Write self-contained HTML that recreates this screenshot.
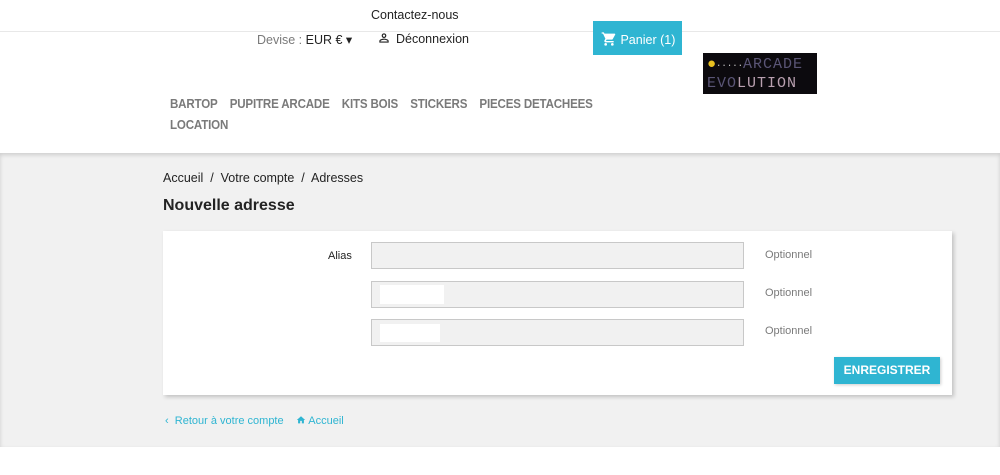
<!DOCTYPE html>
<html><head><meta charset="utf-8"><style>
*{margin:0;padding:0;box-sizing:border-box}
body{width:1000px;height:475px;background:#fff;font-family:"Liberation Sans",sans-serif;color:#232323;position:relative;overflow:hidden}
.a{position:absolute;white-space:nowrap}
.nav{font-weight:bold;font-size:13px;color:#7a7a7a;letter-spacing:-0.2px;transform:scaleX(0.89);transform-origin:0 0}
.gray{position:absolute;left:0;top:153px;width:1000px;height:294px;background:#f1f1f1;box-shadow:inset 0 2px 4px rgba(0,0,0,.15)}
.inp{position:absolute;left:371px;width:373px;height:27px;background:#f1f1f1;border:1px solid #c8c8c8}
.opt{font-size:11px;color:#7a7a7a}
</style></head><body>
<div class="a" style="left:371px;top:8px;font-size:12.5px">Contactez-nous</div>
<div style="position:absolute;left:0;top:31px;width:1000px;height:1px;background:#e8e8e8"></div>
<div class="a" style="left:257px;top:32px;font-size:12.5px;color:#7a7a7a">Devise : <span style="color:#232323">EUR € ▾</span></div>
<svg class="a" style="left:377px;top:31px" width="14" height="14" viewBox="0 0 24 24"><path fill="#232323" d="M12 4a4 4 0 110 8 4 4 0 010-8zm0 2a2 2 0 100 4 2 2 0 000-4zm0 7c2.7 0 8 1.3 8 4v3H4v-3c0-2.7 5.3-4 8-4zm0 2c-3 0-6 1.5-6 2v1h12v-1c0-.5-3-2-6-2z"/></svg>
<div class="a" style="left:396px;top:32px;font-size:12.5px">Déconnexion</div>
<div class="a" style="left:593px;top:21px;width:89px;height:34px;background:#2fb5d2;color:#fff;font-size:12.5px;padding:10px 0 0 8px">
<svg style="vertical-align:-3px" width="16" height="16" viewBox="0 0 24 24"><path fill="#fff" d="M7 18a2 2 0 100 4 2 2 0 000-4zM1 2v2h2l3.6 7.6-1.4 2.4c-.7 1.3.3 3 1.8 3h12v-2H7.4l1.1-2h7.5c.8 0 1.4-.4 1.7-1l3.6-6.5A1 1 0 0020.4 4H5.2l-.9-2H1zm16 16a2 2 0 100 4 2 2 0 000-4z"/></svg> Panier (1)</div>
<div class="a" style="left:703px;top:53px;width:114px;height:41px;background:#0c0a0e;font-family:'Liberation Mono',monospace;font-size:15px;line-height:17px;padding:3px 0 0 4px">
<span style="color:#e8c020">●</span><span style="color:#ccc;font-size:9px">·····</span><span style="color:#5a5576;letter-spacing:1px">ARCADE</span><br><span style="color:#5a5576;letter-spacing:1px">EVO</span><span style="color:#b9a0b0;letter-spacing:1px">LUTION</span></div>
<div class="a nav" style="left:170px;top:96px">BARTOP&nbsp;&nbsp;&nbsp; PUPITRE ARCADE&nbsp;&nbsp;&nbsp; KITS BOIS&nbsp;&nbsp;&nbsp; STICKERS&nbsp;&nbsp;&nbsp; PIECES DETACHEES</div>
<div class="a nav" style="left:170px;top:117px">LOCATION</div>
<div class="gray"></div>
<div class="a" style="left:163px;top:171px;font-size:12.5px">Accueil &nbsp;/&nbsp; Votre compte &nbsp;/&nbsp; Adresses</div>
<div class="a" style="left:163px;top:197px;font-size:16px;font-weight:bold">Nouvelle adresse</div>
<div class="a" style="left:163px;top:231px;width:789px;height:164px;background:#fff;box-shadow:2px 2px 4px rgba(0,0,0,.2)"></div>
<div class="a" style="left:328px;top:250px;font-size:11px">Alias</div>
<div class="inp" style="top:242px"></div>
<div class="inp" style="top:281px"><div style="position:absolute;left:8px;top:3px;width:64px;height:19px;background:#fff"></div></div>
<div class="inp" style="top:319px"><div style="position:absolute;left:8px;top:4px;width:60px;height:18px;background:#fff"></div></div>
<div class="a opt" style="left:765px;top:249px">Optionnel</div>
<div class="a opt" style="left:765px;top:287px">Optionnel</div>
<div class="a opt" style="left:765px;top:325px">Optionnel</div>
<div class="a" style="left:834px;top:357px;width:106px;height:27px;background:#2fb5d2;color:#fff;font-weight:bold;font-size:12px;text-align:center;line-height:27px;box-shadow:1px 1px 3px rgba(0,0,0,.2)">ENREGISTRER</div>
<div class="a" style="left:165px;top:415px;font-size:11px;color:#2fb5d2">‹&nbsp;&nbsp;Retour à votre compte&nbsp;&nbsp;&nbsp;&nbsp;<svg style="vertical-align:-1px" width="10" height="10" viewBox="0 0 24 24"><path fill="#2fb5d2" d="M10 20v-6h4v6h5v-8h3L12 3 2 12h3v8z"/></svg> Accueil</div>
</body></html>
